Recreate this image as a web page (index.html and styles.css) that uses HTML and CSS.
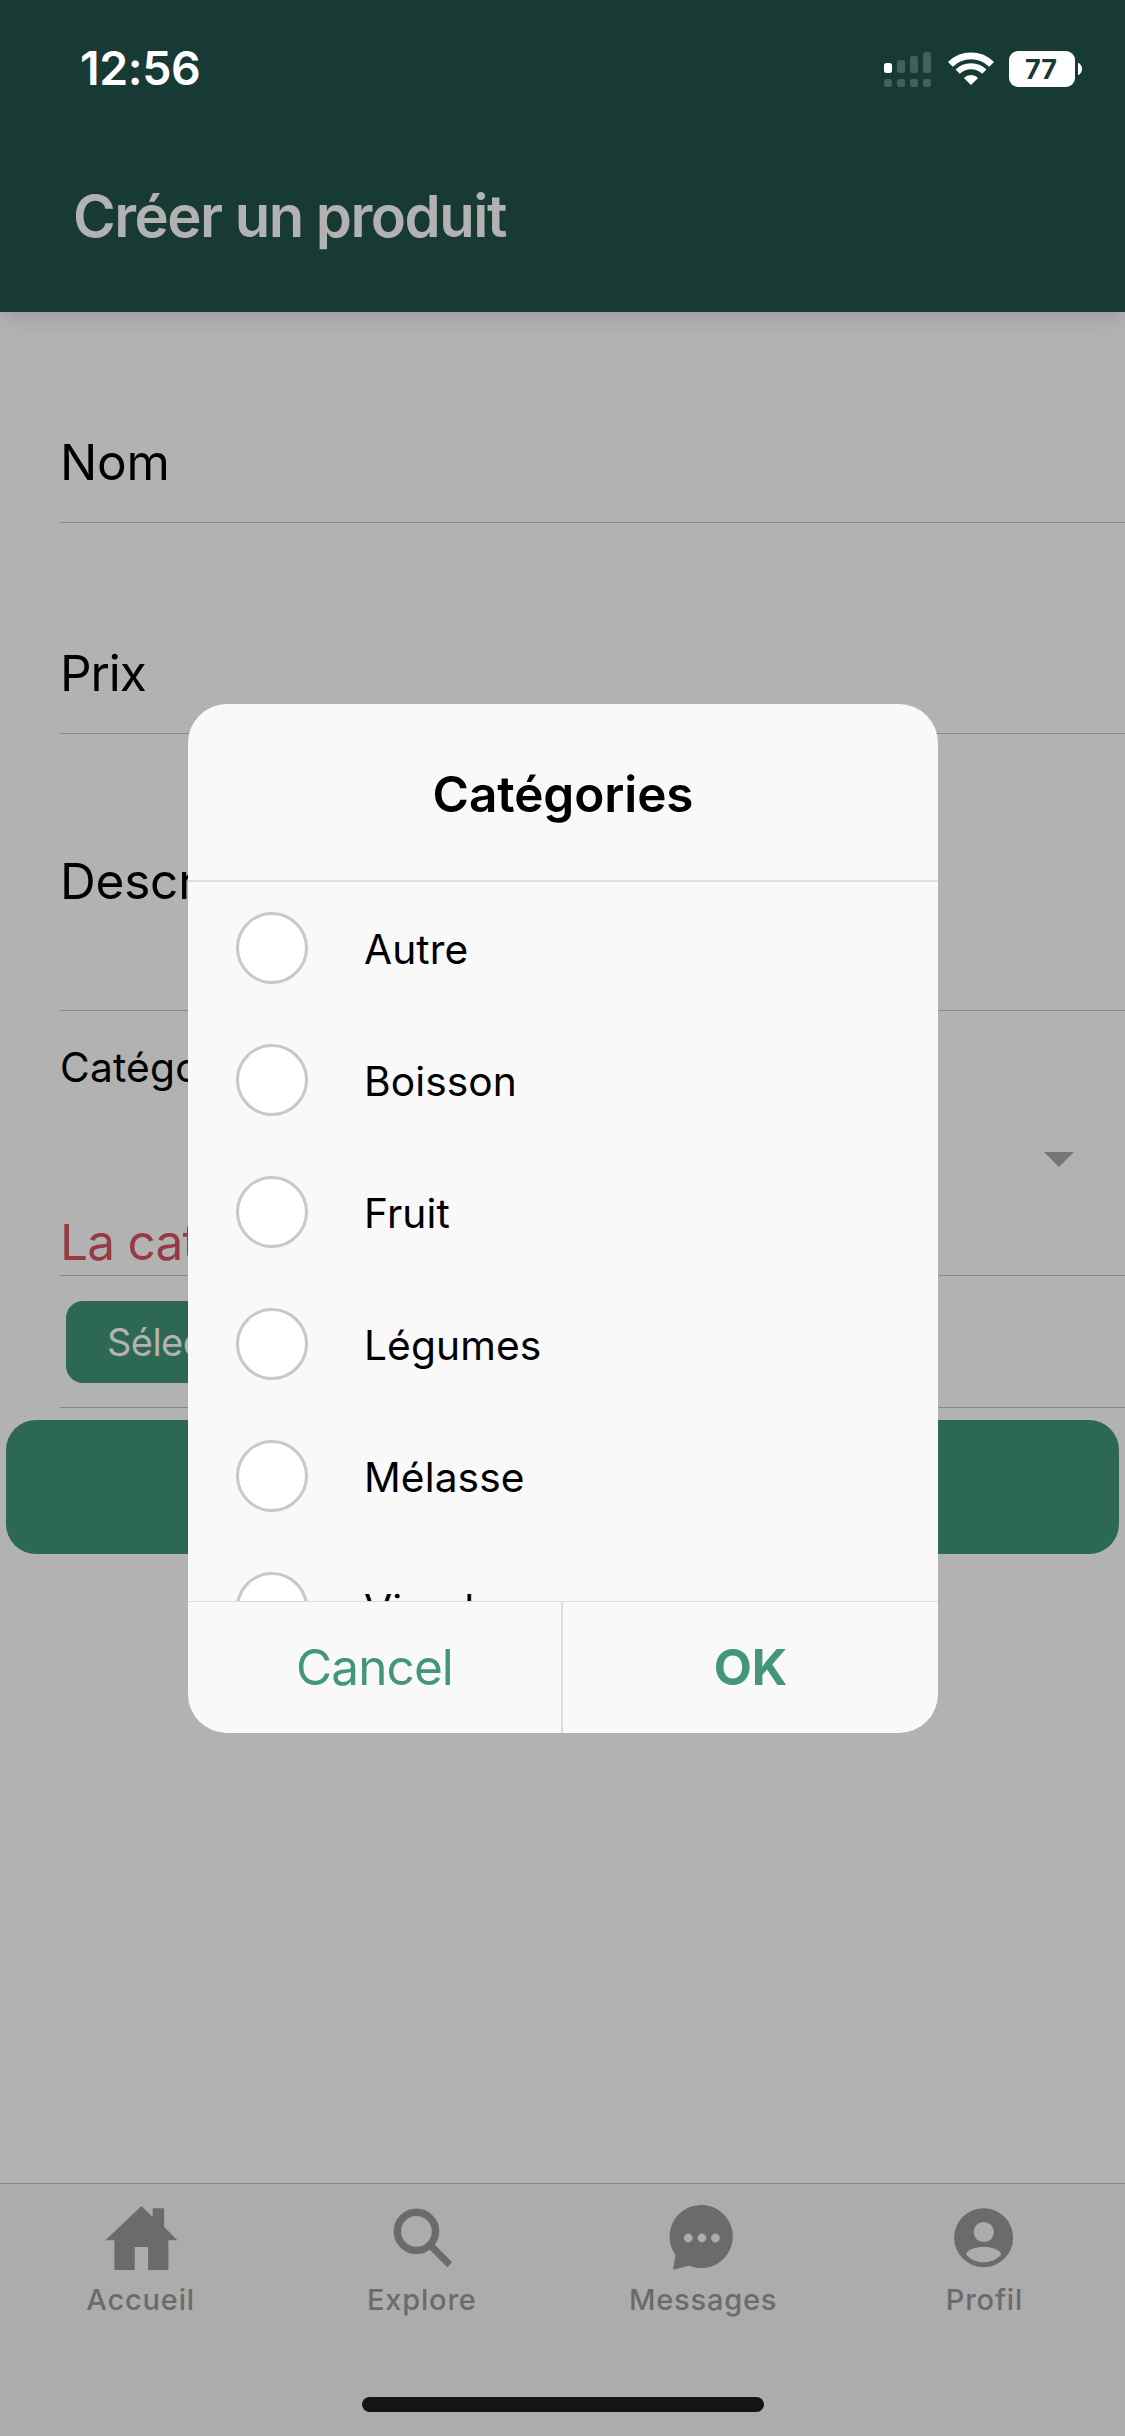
FILE: index.html
```
<!DOCTYPE html>
<html lang="fr">
<head>
<meta charset="utf-8">
<title>Créer un produit</title>
<link rel="stylesheet" href="styles.css">
</head>
<body>
<div class="app">
  <header class="header">
    <div class="status">
      <span class="clock">12:56</span>
      <svg class="status-icons" width="205" height="42" viewBox="0 0 205 42">
        <rect x="4" y="15" width="8" height="10" rx="2.5" fill="#fff"/>
        <g fill="#446159">
          <rect x="17" y="12" width="8" height="13" rx="2.5"/>
          <rect x="30" y="8" width="8" height="17" rx="2.5"/>
          <rect x="43" y="4" width="8" height="21" rx="2.5"/>
          <rect x="4" y="31" width="8" height="8" rx="2.5"/>
          <rect x="17" y="31" width="8" height="8" rx="2.5"/>
          <rect x="30" y="31" width="8" height="8" rx="2.5"/>
          <rect x="43" y="31" width="8" height="8" rx="2.5"/>
        </g>
        <g fill="none" stroke="#fff">
          <path stroke-width="6.8" d="M70.4 16.4A29.2 29.2 0 0 1 111.6 16.4"/>
          <path stroke-width="6" d="M77.7 23.7A18.8 18.8 0 0 1 104.3 23.7"/>
        </g>
        <path fill="#fff" d="M91 37L83.9 29.9A10 10 0 0 1 98.1 29.9Z"/>
        <rect x="129" y="3" width="66" height="36" rx="9" fill="#fff"/>
        <path fill="#fff" d="M198 14.7C200.6 15.8 202 18 202 21S200.6 26 198 27.2Z"/>
        <text class="charge" x="161" y="31" text-anchor="middle">77</text>
      </svg>
    </div>
    <h1 class="title">Créer un produit</h1>
  </header>

  <main class="form">
    <div class="item">Nom</div>
    <div class="item item-price">Prix</div>
    <div class="item item-desc">Description</div>
    <div class="item item-select">
      <span class="select-label">Catégories</span>
      <div class="select-row">
        <svg width="30" height="15" viewBox="0 0 30 15"><path fill="#767676" d="M0 0H30L15 15Z"/></svg>
      </div>
      <span class="error">La catégorie est requise</span>
    </div>
    <div class="item item-file"><button class="pick">Sélectionner une image</button></div>
    <button class="submit"></button>
  </main>

  <nav class="tabs">
    <div class="tab">
      <svg width="80" height="80" viewBox="0 0 80 80"><path d="M40.4 7L51.7 17.9V9.3H63.1V27.9L76.4 41.3H67.4V71H47.1V48H33.7V71H13.4V41.3H4.4Z"/></svg>
      <span>Accueil</span>
    </div>
    <div class="tab">
      <svg width="80" height="80" viewBox="0 0 80 80"><path class="lens" stroke-width="7.4" d="M15.3 32.3a19.1 19.1 0 1 0 38.2 0a19.1 19.1 0 1 0 -38.2 0Z"/><path class="lens" stroke-width="7" d="M48.5 46.5L67.8 65.8"/></svg>
      <span>Explore</span>
    </div>
    <div class="tab">
      <svg width="80" height="80" viewBox="0 0 80 80"><path d="M12.6 56A31.6 31.6 0 1 1 26.2 66.7L9.9 70.7Z"/><g class="hole"><circle cx="25.2" cy="39" r="4.4"/><circle cx="38.9" cy="39" r="4.4"/><circle cx="52.4" cy="39" r="4.4"/></g></svg>
      <span>Messages</span>
    </div>
    <div class="tab">
      <svg width="80" height="80" viewBox="0 0 80 80"><circle cx="39.6" cy="38.7" r="29.5"/><g class="hole"><circle cx="39.8" cy="33" r="10.1"/><path d="M21.9 55C24 50.5 31 48 39.6 48S55.2 50.5 57.3 55C53.5 60.3 47 63.3 39.6 63.3S25.7 60.3 21.9 55Z"/></g></svg>
      <span>Profil</span>
    </div>
  </nav>
  <div class="home-bar"></div>
</div>

<div class="overlay">
  <section class="dialog">
    <h2 class="dialog-title">Catégories</h2>
    <div class="options">
      <div class="option"><i class="radio"></i><span>Autre</span></div>
      <div class="option"><i class="radio"></i><span>Boisson</span></div>
      <div class="option"><i class="radio"></i><span>Fruit</span></div>
      <div class="option"><i class="radio"></i><span>Légumes</span></div>
      <div class="option"><i class="radio"></i><span>Mélasse</span></div>
      <div class="option"><i class="radio"></i><span>Viande</span></div>
    </div>
    <div class="actions">
      <button class="action cancel">Cancel</button>
      <button class="action ok">OK</button>
    </div>
  </section>
</div>
</body>
</html>
```
FILE: styles.css
```
* {
  box-sizing: border-box;
  margin: 0;
  padding: 0;
}

body {
  width: 1125px;
  height: 2436px;
  overflow: hidden;
  background: #b2b2b2;
  color: #000;
  font-family: Inter, "Liberation Sans", sans-serif;
}

button {
  display: block;
  border: 0;
  background: none;
  font-family: inherit;
}

svg {
  display: block;
}

.app {
  position: relative;
  display: flex;
  flex-direction: column;
  height: 2436px;
}

/* Header */
.header {
  height: 312px;
  background: #183a34;
  box-shadow: 0 5px 20px -3px rgba(0, 0, 0, 0.17);
}

.status {
  display: flex;
  justify-content: space-between;
  height: 132px;
  padding: 38px 40px 0 80px;
}

.clock {
  color: #fff;
  font-size: 46.5px;
  font-weight: 600;
  line-height: 61px;
  letter-spacing: -0.4px;
}

.status-icons {
  margin-top: 10px;
}

.charge {
  fill: #183a34;
  font-size: 27px;
  font-weight: 700;
}

.title {
  padding: 54px 73px 0;
  color: #b2b2b2;
  font-size: 58px;
  font-weight: 600;
  line-height: 60px;
  letter-spacing: -1.5px;
}

/* Form */
.form {
  flex: 1;
}

.item {
  display: flex;
  align-items: flex-end;
  height: 211px;
  margin-left: 60px;
  padding-bottom: 30px;
  border-bottom: 1px solid #888889;
  font-size: 49.5px;
  line-height: 60px;
  letter-spacing: -0.2px;
}

.item-price {
  letter-spacing: -1.1px;
}

.item-desc {
  height: 277px;
  padding-bottom: 99px;
}

.item-select {
  flex-direction: column;
  align-items: stretch;
  height: 265px;
  padding: 32px 51px 3px 0;
}

.select-label {
  font-size: 40.7px;
  line-height: 50px;
  letter-spacing: 0.2px;
}

.select-row {
  display: flex;
  flex: 1;
  justify-content: flex-end;
  padding-top: 59px;
}

.error {
  color: #963a44;
  letter-spacing: -0.75px;
}

.item-file {
  align-items: flex-start;
  height: 132px;
  padding: 25px 6px 0;
}

.pick {
  height: 82px;
  padding: 0 41px;
  border-radius: 17px;
  background: #2d6854;
  color: #b2b2b2;
  font-size: 38px;
  line-height: 81px;
  letter-spacing: -0.55px;
}

.submit {
  width: 1113px;
  height: 134px;
  margin: 12px 6px 0;
  border-radius: 30px;
  background: #2d6854;
}

/* Tab bar */
.tabs {
  display: grid;
  grid-template-columns: repeat(4, 1fr);
  height: 253px;
  padding-top: 15px;
  border-top: 1px solid #888889;
  background: #acacac;
}

.tab {
  display: flex;
  flex-direction: column;
  align-items: center;
  gap: 3px;
  color: #6b6b6b;
  fill: #6b6b6b;
  font-size: 29px;
  font-weight: 500;
  line-height: 36px;
  letter-spacing: 0.8px;
}

.lens {
  fill: none;
  stroke: #6b6b6b;
}

.hole {
  fill: #acacac;
}

.home-bar {
  position: absolute;
  left: 362px;
  bottom: 24px;
  width: 402px;
  height: 15px;
  border-radius: 8px;
  background: #141414;
}

/* Dialog */
.overlay {
  position: absolute;
  inset: 0;
  padding: 704px 187px 0 188px;
}

.dialog {
  width: 750px;
  height: 1029px;
  overflow: hidden;
  border-radius: 39px;
  background: #f9f9f9;
}

.dialog-title {
  height: 178px;
  padding-top: 60px;
  border-bottom: 2px solid #dfdfdf;
  font-size: 49.5px;
  font-weight: 600;
  line-height: 60px;
  letter-spacing: -0.1px;
  text-align: center;
}

.options {
  height: 719px;
  overflow: hidden;
}

.option {
  display: flex;
  align-items: center;
  gap: 56px;
  height: 132px;
  padding-left: 48px;
  font-size: 40.7px;
  line-height: 50px;
  letter-spacing: 0.1px;
}

.option span {
  padding-top: 3px;
}

.radio {
  width: 72px;
  height: 72px;
  border: 3px solid #c8c7cc;
  border-radius: 50%;
  background: #fff;
}

.actions {
  display: grid;
  grid-template-columns: 1fr 1fr;
  height: 132px;
  border-top: 1px solid #dcdcdc;
}

.action {
  padding: 35px 0 36px;
  color: #449679;
  font-size: 49.5px;
  line-height: 60px;
}

.cancel {
  border-right: 2px solid #dcdcdc;
  letter-spacing: -0.9px;
}

.ok {
  font-weight: 700;
}
```
